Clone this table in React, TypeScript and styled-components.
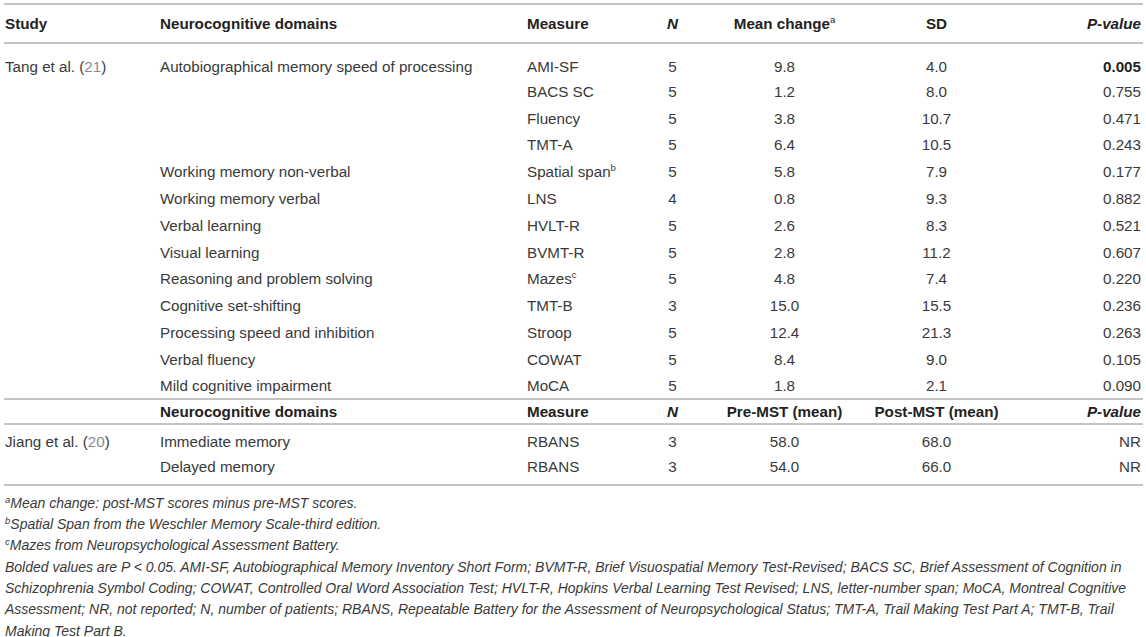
import React from "react";
import styled, { createGlobalStyle } from "styled-components";

const Global = createGlobalStyle`
  html, body { margin: 0; padding: 0; background: #fff; }
  body { font-family: "Liberation Sans", Arial, sans-serif; color: #3a3a3a; }
`;

const Page = styled.div`
  width: 1146px;
  padding: 3px 3px 0 4px;
  box-sizing: border-box;
`;

const Table = styled.table`
  width: 1139px;
  border-collapse: collapse;
  table-layout: fixed;
  font-size: 15.2px;
  border-top: 2px solid #c4c4c4;
  border-bottom: 2px solid #c4c4c4;
`;

const HeadRow = styled.tr<{ $h: number; $top?: boolean }>`
  height: ${(p) => p.$h}px;
  border-bottom: 2px solid #c4c4c4;
  ${(p) => (p.$top ? "border-top: 2px solid #c4c4c4;" : "")}
`;

const Th = styled.th<{ $align?: string; $italic?: boolean }>`
  font-weight: bold;
  color: #222;
  text-align: ${(p) => p.$align || "left"};
  font-style: ${(p) => (p.$italic ? "italic" : "normal")};
  padding: 0 2px 0 1px;
  vertical-align: middle;
  white-space: nowrap;
`;

const Row = styled.tr<{ $h: number }>`
  height: ${(p) => p.$h}px;
`;

const Td = styled.td<{ $align?: string; $bold?: boolean; $pt?: number; $pb?: number }>`
  text-align: ${(p) => p.$align || "left"};
  font-weight: ${(p) => (p.$bold ? "bold" : "normal")};
  color: ${(p) => (p.$bold ? "#222" : "#3a3a3a")};
  padding: ${(p) => p.$pt || 0}px 2px ${(p) => p.$pb || 0}px 1px;
  vertical-align: middle;
  white-space: nowrap;
`;

const Ref = styled.span`
  color: #8a8a8a;
`;

const Sup = styled.sup`
  font-size: 9.5px;
  font-weight: normal;
  vertical-align: 6px;
  line-height: 0;
`;

const Notes = styled.div`
  font-size: 14px;
  font-style: italic;
  line-height: 21.3px;
  color: #3a3a3a;
  padding: 7px 0 0 1px;
  width: 1142px;
`;

const Note = styled.p`
  margin: 0;
`;

const NoteSup = styled.sup`
  font-size: 9.5px;
  vertical-align: 5px;
  line-height: 0;
`;

type R = [string, string, string, string, string, string, string, boolean?];

const tang: R[] = [
  ["Autobiographical memory speed of processing", "AMI-SF", "5", "9.8", "4.0", "0.005", "", true],
  ["", "BACS SC", "5", "1.2", "8.0", "0.755", ""],
  ["", "Fluency", "5", "3.8", "10.7", "0.471", ""],
  ["", "TMT-A", "5", "6.4", "10.5", "0.243", ""],
  ["Working memory non-verbal", "Spatial span", "5", "5.8", "7.9", "0.177", "b"],
  ["Working memory verbal", "LNS", "4", "0.8", "9.3", "0.882", ""],
  ["Verbal learning", "HVLT-R", "5", "2.6", "8.3", "0.521", ""],
  ["Visual learning", "BVMT-R", "5", "2.8", "11.2", "0.607", ""],
  ["Reasoning and problem solving", "Mazes", "5", "4.8", "7.4", "0.220", "c"],
  ["Cognitive set-shifting", "TMT-B", "3", "15.0", "15.5", "0.236", ""],
  ["Processing speed and inhibition", "Stroop", "5", "12.4", "21.3", "0.263", ""],
  ["Verbal fluency", "COWAT", "5", "8.4", "9.0", "0.105", ""],
  ["Mild cognitive impairment", "MoCA", "5", "1.8", "2.1", "0.090", ""],
];

const jiang = [
  ["Immediate memory", "RBANS", "3", "58.0", "68.0", "NR"],
  ["Delayed memory", "RBANS", "3", "54.0", "66.0", "NR"],
];

export default function App() {
  return (
    <Page>
      <Global />
      <Table>
        <colgroup>
          <col style={{ width: 155 }} />
          <col style={{ width: 367 }} />
          <col style={{ width: 112 }} />
          <col style={{ width: 70 }} />
          <col style={{ width: 154 }} />
          <col style={{ width: 150 }} />
          <col style={{ width: 131 }} />
        </colgroup>
        <thead>
          <HeadRow $h={39}>
            <Th>Study</Th>
            <Th>Neurocognitive domains</Th>
            <Th>Measure</Th>
            <Th $align="center" $italic>N</Th>
            <Th $align="center">
              Mean change<Sup>a</Sup>
            </Th>
            <Th $align="center">SD</Th>
            <Th $align="right" $italic>P-value</Th>
          </HeadRow>
        </thead>
        <tbody>
          {tang.map((r, i) => {
            const pt = i === 0 ? 10 : 0;
            return (
              <Row key={i} $h={i === 0 ? 35 : i === tang.length - 1 ? 26 : 26.8}>
                <Td $pt={pt}>
                  {i === 0 ? (
                    <>
                      Tang et al. (<Ref>21</Ref>)
                    </>
                  ) : null}
                </Td>
                <Td $pt={pt}>{r[0]}</Td>
                <Td $pt={pt}>
                  {r[1]}
                  {r[6] ? <Sup>{r[6]}</Sup> : null}
                </Td>
                <Td $align="center" $pt={pt}>{r[2]}</Td>
                <Td $align="center" $pt={pt}>{r[3]}</Td>
                <Td $align="center" $pt={pt}>{r[4]}</Td>
                <Td $align="right" $bold={r[7]} $pt={pt}>{r[5]}</Td>
              </Row>
            );
          })}
          <HeadRow $h={25} $top>
            <Th></Th>
            <Th>Neurocognitive domains</Th>
            <Th>Measure</Th>
            <Th $align="center" $italic>N</Th>
            <Th $align="center">Pre-MST (mean)</Th>
            <Th $align="center">Post-MST (mean)</Th>
            <Th $align="right" $italic>P-value</Th>
          </HeadRow>
          {jiang.map((r, i) => {
            const pt = i === 0 ? 4 : 0;
            const pb = i === 1 ? 6 : 0;
            return (
              <Row key={i} $h={i === 0 ? 31 : 30}>
                <Td $pt={pt} $pb={pb}>
                  {i === 0 ? (
                    <>
                      Jiang et al. (<Ref>20</Ref>)
                    </>
                  ) : null}
                </Td>
                <Td $pt={pt} $pb={pb}>{r[0]}</Td>
                <Td $pt={pt} $pb={pb}>{r[1]}</Td>
                <Td $align="center" $pt={pt} $pb={pb}>{r[2]}</Td>
                <Td $align="center" $pt={pt} $pb={pb}>{r[3]}</Td>
                <Td $align="center" $pt={pt} $pb={pb}>{r[4]}</Td>
                <Td $align="right" $pt={pt} $pb={pb}>{r[5]}</Td>
              </Row>
            );
          })}
        </tbody>
      </Table>
      <Notes>
        <Note>
          <NoteSup>a</NoteSup>Mean change: post-MST scores minus pre-MST scores.
        </Note>
        <Note>
          <NoteSup>b</NoteSup>Spatial Span from the Weschler Memory Scale-third edition.
        </Note>
        <Note>
          <NoteSup>c</NoteSup>Mazes from Neuropsychological Assessment Battery.
        </Note>
        <Note>
          Bolded values are P &lt; 0.05. AMI-SF, Autobiographical Memory Inventory Short Form; BVMT-R, Brief
          Visuospatial Memory Test-Revised; BACS SC, Brief Assessment of Cognition in Schizophrenia Symbol Coding;
          COWAT, Controlled Oral Word Association Test; HVLT-R, Hopkins Verbal Learning Test Revised; LNS,
          letter-number span; MoCA, Montreal Cognitive Assessment; NR, not reported; N, number of patients; RBANS,
          Repeatable Battery for the Assessment of Neuropsychological Status; TMT-A, Trail Making Test Part A; TMT-B,
          Trail Making Test Part B.
        </Note>
      </Notes>
    </Page>
  );
}
